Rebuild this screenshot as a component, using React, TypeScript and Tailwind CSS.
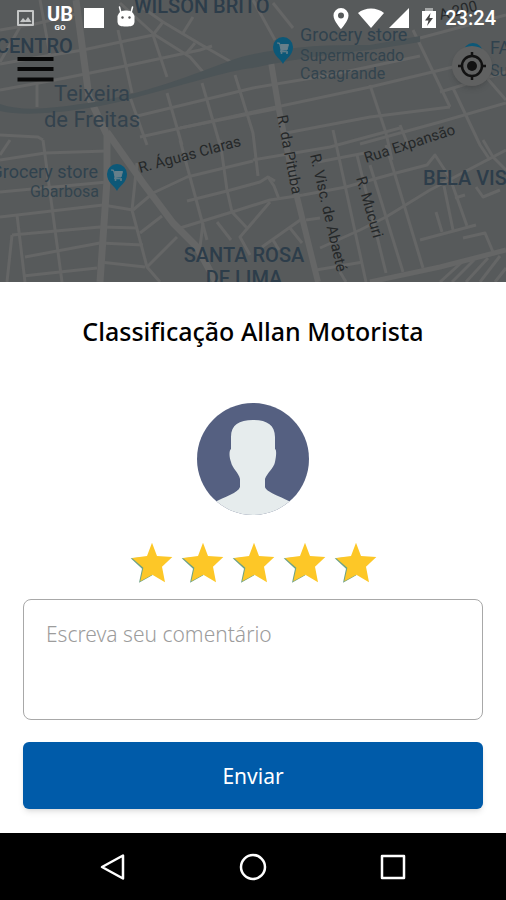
import { useState } from "react";

const roads = [
	"M0 90L55 80L130 65L200 50L212 46",
	"M0 64L40 57L83 50L153 35",
	"M120 3L155 35L190 57L203 72",
	"M143 8L163 22L200 44L233 63",
	"M153 35L163 22",
	"M193 17L183 33",
	"M195 43L185 55",
	"M118 30L132 93",
	"M153 35L167 77",
	"M130 97L147 145",
	"M167 93L182 145",
	"M202 83L220 145",
	"M235 75L253 133L258 176",
	"M133 117L253 88L330 75L420 56",
	"M140 137L253 112L370 87L453 67",
	"M37 83L37 107",
	"M0 135L38 137L43 140",
	"M24 20L0 62",
	"M40 0L50 55",
	"M0 30L35 24L76 14",
	"M273 3L293 28",
	"M253 0L275 40",
	"M370 85L386 133L392 160",
	"M413 30L450 107",
	"M453 88L480 145L490 160",
	"M286 133L370 117L450 107",
	"M360 144L440 122L506 103",
	"M440 92L506 72",
	"M400 125L408 145",
	"M480 70L506 100",
	"M420 38L506 15",
	"M180 128L280 108",
	"M43 140L62 282",
	"M0 160L45 153L107 151",
	"M0 192L107 182",
	"M0 217L103 205L133 210",
	"M17 215L25 282",
	"M12 235L7 282",
	"M12 235L100 227L138 228",
	"M25 257L100 243L143 245",
	"M23 276L97 268",
	"M100 262L145 267",
	"M137 163L132 210L147 267L160 282",
	"M133 210L153 193L187 177L253 161",
	"M140 233L162 216",
	"M147 267L177 237",
	"M180 228L232 212L270 200L303 195",
	"M187 201L227 191L260 182L268 177L275 181",
	"M180 140L207 240",
	"M220 140L227 190L232 212L247 228",
	"M217 222L231 240",
	"M200 247L203 223",
	"M270 202L240 237L250 255",
	"M0 155L10 140",
	"M253 160L330 147L400 128",
	"M268 177L274 186L279 199",
	"M303 195L346 187L396 173L427 165L435 155L450 178L467 226",
	"M333 130L366 282",
	"M357 155L386 273",
	"M370 165L403 272",
	"M386 145L423 268",
	"M318 162L365 153",
	"M320 248L360 230L386 217L430 190L506 150",
	"M262 247L303 218",
	"M290 228L302 243",
	"M273 240L279 250",
	"M316 270L363 262",
	"M320 218L306 220",
	"M420 240L476 225",
	"M436 212L442 232",
	"M444 186L453 230",
	"M463 238L485 233L493 252",
	"M483 140L493 157L506 170",
	"M476 187L483 197L500 190",
	"M340 272L346 282",
	"M440 282L462 262",
	"M452 282L474 260",
	"M466 282L488 258",
	"M480 282L500 256",
	"M495 282L506 268",
	"M465 195L455 198",
];

const stars = [1, 2, 3, 4, 5];

const StorePin = ({ x, y }: { x: number; y: number }) => (
	<g transform={`translate(${x} ${y})`}>
		<path
			d="M0 14C-2 9-10 6-10-3a10 10 0 0 1 20 0C10 6 2 9 0 14Z"
			fill="#0c5878"
		/>
		<path
			d="M-6-7h2.500l1.500 7h6l1.500-5.500h-8M-2 0l-.5 1.800H5"
			fill="#667f8a"
			stroke="#667f8a"
			strokeWidth="1"
		/>
		<circle cx="-1.500" cy="3" r="1" fill="#667f8a" />
		<circle cx="4" cy="3" r="1" fill="#667f8a" />
	</g>
);

const CityMap = () => (
	<svg
		className="absolute inset-0 h-full w-full"
		viewBox="0 0 506 282"
		preserveAspectRatio="xMidYMin slice"
		fontFamily="Roboto, sans-serif"
		role="img"
		aria-label="Mapa de Teixeira de Freitas"
	>
		<rect width="506" height="282" fill="#575a5b" />
		<g fill="none" stroke="#656666" strokeLinejoin="round">
			{roads.map((d) => (
				<path key={d} d={d} strokeWidth="3" />
			))}
			<path d="M76 0L82 45L89 97L107 135L107 180L100 282" strokeWidth="7" />
			<path d="M107 132L143 183L173 223L197 247L216 282" strokeWidth="7" />
			<path d="M271 62L279 110L296 193L318 282" strokeWidth="6" />
			<path d="M370 282L440 267L506 250" strokeWidth="5" />
		</g>
		<path
			d="M0 104C25 113 60 107 95 102C145 93 190 76 232 60C260 50 310 44 370 45L420 36V42L370 50C320 55 280 62 253 68C230 70 180 86 130 99C90 110 30 118 0 111Z"
			fill="#4c5457"
		/>

		<g fill="#2d3d4a" fontSize="20" fontWeight="500">
			<text x="134" y="13">WILSON BRITO</text>
			<text x="-4" y="53">CENTRO</text>
			<text x="423" y="185">BELA VISTA</text>
			<text x="244" y="262" textAnchor="middle">SANTA ROSA</text>
			<text x="244" y="285" textAnchor="middle">DE LIMA</text>
		</g>
		<g fill="#33424d" fontSize="22" textAnchor="middle">
			<text x="92" y="101">Teixeira</text>
			<text x="92" y="127">de Freitas</text>
		</g>
		<g fill="#30424e" fontSize="18">
			<text x="300" y="41">Grocery store</text>
			<text x="98" y="178" textAnchor="end">Grocery store</text>
			<text x="490" y="54">FARMA</text>
		</g>
		<g fill="#33444e" fontSize="16">
			<text x="300" y="61">Supermercado</text>
			<text x="300" y="79">Casagrande</text>
			<text x="99" y="197" textAnchor="end">Gbarbosa</text>
			<text x="490" y="76">Super</text>
		</g>
		<g fill="#252829" fontSize="15">
			<text transform="translate(140 173) rotate(-15)">R. Águas Claras</text>
			<text transform="translate(366 163) rotate(-18)">Rua Expansão</text>
			<text transform="translate(277 116) rotate(79)">R. da Pituba</text>
			<text transform="translate(310 155) rotate(77)">R. Visc. de Abaeté</text>
			<text transform="translate(356 178) rotate(74)">R. Mucuri</text>
			<text transform="translate(424 24) rotate(-14)">R. A 200</text>
		</g>

		<StorePin x={283} y={50} />
		<StorePin x={117} y={177} />
		<circle cx="473" cy="53" r="10" fill="#0c5878" />
	</svg>
);

const StatusBar = () => (
	<div className="flex h-9 items-center justify-between pr-2.5 pl-4 text-white">
		<div className="flex items-center gap-3">
			<svg className="h-5 w-5" viewBox="0 0 20 20" fill="none">
				<path
					d="M2 3h15v14H2Z"
					stroke="#c4c6c6"
					strokeWidth="2"
					strokeLinejoin="round"
				/>
				<path d="M4 14L7 10L9.500 12.500L12 9L15.500 14Z" fill="#c4c6c6" />
			</svg>
			<div className="flex w-6 flex-col items-center font-['Roboto',sans-serif] font-bold">
				<span className="text-xl leading-5">UB</span>
				<span className="text-[8px] leading-2">GO</span>
			</div>
			<div className="h-5 w-5 bg-white" />
			<svg className="h-6 w-5" viewBox="0 0 20 24" fill="white">
				<path
					d="M5 7L3.500 1M15 7L16.500 1"
					stroke="white"
					strokeWidth="1.500"
					strokeLinecap="round"
				/>
				<path d="M2.500 8C4 5 7 4.500 10 4.500S16 5 17.500 8L18.500 10V16C18 20 15 20.500 10 20.500S2 20 1.500 16V10Z" />
				<circle cx="6.500" cy="11.500" r="1.200" fill="#555" />
				<circle cx="13.500" cy="11.500" r="1.200" fill="#555" />
			</svg>
		</div>
		<div className="flex items-center gap-2">
			<svg className="h-6 w-4" viewBox="0 0 16 24" fill="white">
				<path
					fillRule="evenodd"
					d="M8 2a7.500 7.500 0 0 1 7.500 7.500C15.500 15 8 23 8 23S.5 15 .5 9.500A7.500 7.500 0 0 1 8 2Zm0 4.500a3 3 0 1 0 0 6 3 3 0 0 0 0-6Z"
				/>
			</svg>
			<svg className="h-6 w-7" viewBox="0 0 28 24" fill="white">
				<path d="M1 7C8 1 20 1 27 7L14 22Z" />
			</svg>
			<svg className="-ml-1 h-6 w-5" viewBox="0 0 20 24" fill="white">
				<path d="M20 2V22H0Z" />
			</svg>
			<svg className="ml-1 h-6 w-4" viewBox="0 0 16 24">
				<path d="M4 2h8v3H4Z" fill="#a5a7a7" />
				<path d="M1 5H15V22H1Z" fill="white" />
				<path d="M9.500 7L4 14.500h3.500L6 20l6-8H8.500Z" fill="#444" />
			</svg>
			<span className="font-['Roboto',sans-serif] text-xl leading-6 font-medium">
				23:24
			</span>
		</div>
	</div>
);

const Avatar = () => (
	<svg
		className="mx-auto mt-14 block h-28 w-28"
		viewBox="0 0 112 112"
		role="img"
		aria-label="Allan Motorista"
	>
		<clipPath id="avatar">
			<circle cx="56" cy="56" r="56" />
		</clipPath>
		<g clipPath="url(#avatar)">
			<rect width="112" height="112" fill="#556081" />
			<path
				d="M56 17C70 17 78 22 78 34V46C80 47 79 54 78 59C77 65 70 70 68 76V84C69 89 83 93 98 101V112H14V101C29 93 41 90 43 84V76C42 70 35 65 34 59C32 54 32 47 34 46V34C34 22 42 17 56 17Z"
				fill="#e6eced"
			/>
		</g>
	</svg>
);

const App = () => {
	const [rating, setRating] = useState(5);
	const [comment, setComment] = useState("");

	return (
		<div className="flex min-h-screen flex-col bg-white font-['Noto_Sans',sans-serif]">
			<header className="relative min-h-44 flex-1 overflow-hidden">
				<CityMap />
				<div className="relative">
					<StatusBar />
					<div className="flex items-start justify-between pt-2.5 pr-3.5 pl-4">
						<button type="button" aria-label="Menu" className="pt-2">
							<svg
								className="h-8 w-10"
								viewBox="0 0 40 32"
								stroke="#080808"
								strokeWidth="4"
							>
								<path d="M1.500 5H37.500M1.500 15H37.500M1.500 25.500H37.500" />
							</svg>
						</button>
						<button
							type="button"
							aria-label="Minha localização"
							className="flex h-10 w-10 items-center justify-center rounded-full bg-[#606161] shadow-md"
						>
							<svg
								className="h-8 w-8"
								viewBox="0 0 32 32"
								fill="none"
								stroke="#121212"
								strokeWidth="2.500"
							>
								<circle cx="16" cy="16" r="10" />
								<path d="M16 2V7M16 25V30M2 16H7M25 16H30" />
								<circle cx="16" cy="16" r="5" fill="#121212" stroke="none" />
							</svg>
						</button>
					</div>
				</div>
			</header>

			<main>
				<form
					className="px-[23px] pt-[33px] pb-6"
					onSubmit={(e) => e.preventDefault()}
				>
					<h1 className="text-center text-[25px] leading-8 font-medium text-black">
						Classificação Allan Motorista
					</h1>
					<Avatar />
					<fieldset className="mt-6 flex justify-center gap-2">
						<legend className="sr-only">Avaliação</legend>
						{stars.map((star) => (
							<label key={star} className="relative cursor-pointer">
								<input
									type="radio"
									name="rating"
									value={star}
									checked={rating === star}
									onChange={() => setRating(star)}
									aria-label={`${star} estrelas`}
									className="absolute inset-0 appearance-none"
								/>
								<svg className="h-11 w-[43px]" viewBox="0 0 129 132">
									<path
										d="M51 54L2 58L36 89L27 131L67 109L60 60Z"
										fill="#6fa386"
									/>
									<path
										d="M66 11L81 51L127 54L96 83L105 130L67 107L31 127L40 86L6 57L51 51Z"
										fill={star <= rating ? "#fdc727" : "#d9d9d9"}
									/>
								</svg>
							</label>
						))}
					</fieldset>
					<textarea
						aria-label="Comentário"
						placeholder="Escreva seu comentário"
						value={comment}
						onChange={(e) => setComment(e.target.value)}
						className="mt-4 block h-[121px] w-full resize-none rounded-lg border border-[#a8a8a8] px-[22px] py-[18px] text-[21px] leading-8 font-light text-black placeholder:text-[#9c9c9c]"
					/>
					<button
						type="submit"
						className="mt-[22px] h-[67px] w-full rounded-md bg-[#005ba9] text-[21px] leading-8 text-white shadow-md"
					>
						Enviar
					</button>
				</form>
			</main>

			<nav className="flex h-[67px] items-center justify-between bg-black px-[99px]">
				<button type="button" aria-label="Voltar">
					<svg
						className="h-7 w-7"
						viewBox="0 0 28 28"
						fill="none"
						stroke="white"
						strokeWidth="2.500"
						strokeLinejoin="round"
					>
						<path d="M24 2.500V25.500L3 14Z" />
					</svg>
				</button>
				<button type="button" aria-label="Início">
					<svg
						className="h-7 w-7"
						viewBox="0 0 28 28"
						fill="none"
						stroke="white"
						strokeWidth="2.500"
					>
						<circle cx="14" cy="14" r="12" />
					</svg>
				</button>
				<button type="button" aria-label="Recentes">
					<svg
						className="h-7 w-7"
						viewBox="0 0 28 28"
						fill="none"
						stroke="white"
						strokeWidth="2.500"
						strokeLinejoin="round"
					>
						<path d="M3 3H25V25H3Z" />
					</svg>
				</button>
			</nav>
		</div>
	);
};

export default App;
